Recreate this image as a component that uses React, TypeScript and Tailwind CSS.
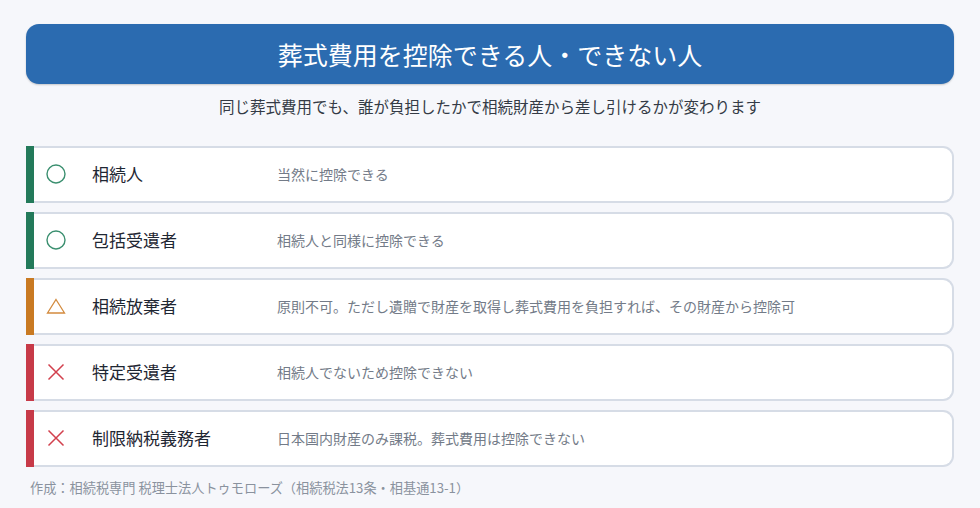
import React from 'react';

type Kind = 'ok' | 'partial' | 'ng';

type Row = {
  kind: Kind;
  name: string;
  desc: string;
};

const rows: Row[] = [
  { kind: 'ok', name: '相続人', desc: '当然に控除できる' },
  { kind: 'ok', name: '包括受遺者', desc: '相続人と同様に控除できる' },
  { kind: 'partial', name: '相続放棄者', desc: '原則不可。ただし遺贈で財産を取得し葬式費用を負担すれば、その財産から控除可' },
  { kind: 'ng', name: '特定受遺者', desc: '相続人でないため控除できない' },
  { kind: 'ng', name: '制限納税義務者', desc: '日本国内財産のみ課税。葬式費用は控除できない' },
];

const barColor: Record<Kind, string> = {
  ok: 'bg-[#237a5a]',
  partial: 'bg-[#c97a22]',
  ng: 'bg-[#c73a48]',
};

function Mark({ kind }: { kind: Kind }) {
  if (kind === 'ok') {
    return (
      <svg width="20" height="20" viewBox="0 0 20 20">
        <circle cx="10" cy="10" r="9" fill="none" stroke="#3a8f6f" strokeWidth="1.4" />
      </svg>
    );
  }
  if (kind === 'partial') {
    return (
      <svg width="20" height="20" viewBox="0 0 20 20">
        <path d="M10 3.5 L18.5 17 L1.5 17 Z" fill="none" stroke="#d38b3e" strokeWidth="1.3" />
      </svg>
    );
  }
  return (
    <svg width="20" height="20" viewBox="0 0 20 20">
      <path d="M2.5 2.5 L17.5 17.5 M17.5 2.5 L2.5 17.5" stroke="#d2404d" strokeWidth="1.5" />
    </svg>
  );
}

export default function App() {
  return (
    <div
      className="w-[980px] h-[508px] bg-[#f6f7fb] px-[26px] pt-[24px] overflow-hidden"
      style={{ fontFamily: '"Noto Sans CJK JP", "Noto Sans", sans-serif' }}
    >
      <div className="h-[60px] rounded-[13px] bg-[#2b6bb0] shadow-[0_1px_2px_rgba(0,0,0,0.2)] flex items-center justify-center">
        <h1 className="text-white text-[25px] leading-none">葬式費用を控除できる人・できない人</h1>
      </div>

      <p className="mt-[12px] text-center text-[15.5px] leading-[20px] text-[#343b46]">
        同じ葬式費用でも、誰が負担したかで相続財産から差し引けるかが変わります
      </p>

      <div className="mt-[30px] flex flex-col gap-[9px] w-[928px]">
        {rows.map((r) => (
          <div key={r.name} className="flex h-[57px]">
            <div className={`w-[8px] shrink-0 ${barColor[r.kind]}`} />
            <div className="flex-1 flex items-center pb-[2px] bg-white border-2 border-l-0 border-[#d6dce6] rounded-r-[11px]">
              <span className="ml-[12px] w-[20px] flex items-center justify-center">
                <Mark kind={r.kind} />
              </span>
              <span className="ml-[26px] w-[185px] text-[17px] text-[#1f2733] leading-none">{r.name}</span>
              <span className="text-[14px] text-[#737b88] leading-none">{r.desc}</span>
            </div>
          </div>
        ))}
      </div>

      <p className="mt-[11px] ml-[4px] text-[13.2px] text-[#8a929e]">
        作成：相続税専門 税理士法人トゥモローズ（相続税法13条・相基通13-1）
      </p>
    </div>
  );
}
